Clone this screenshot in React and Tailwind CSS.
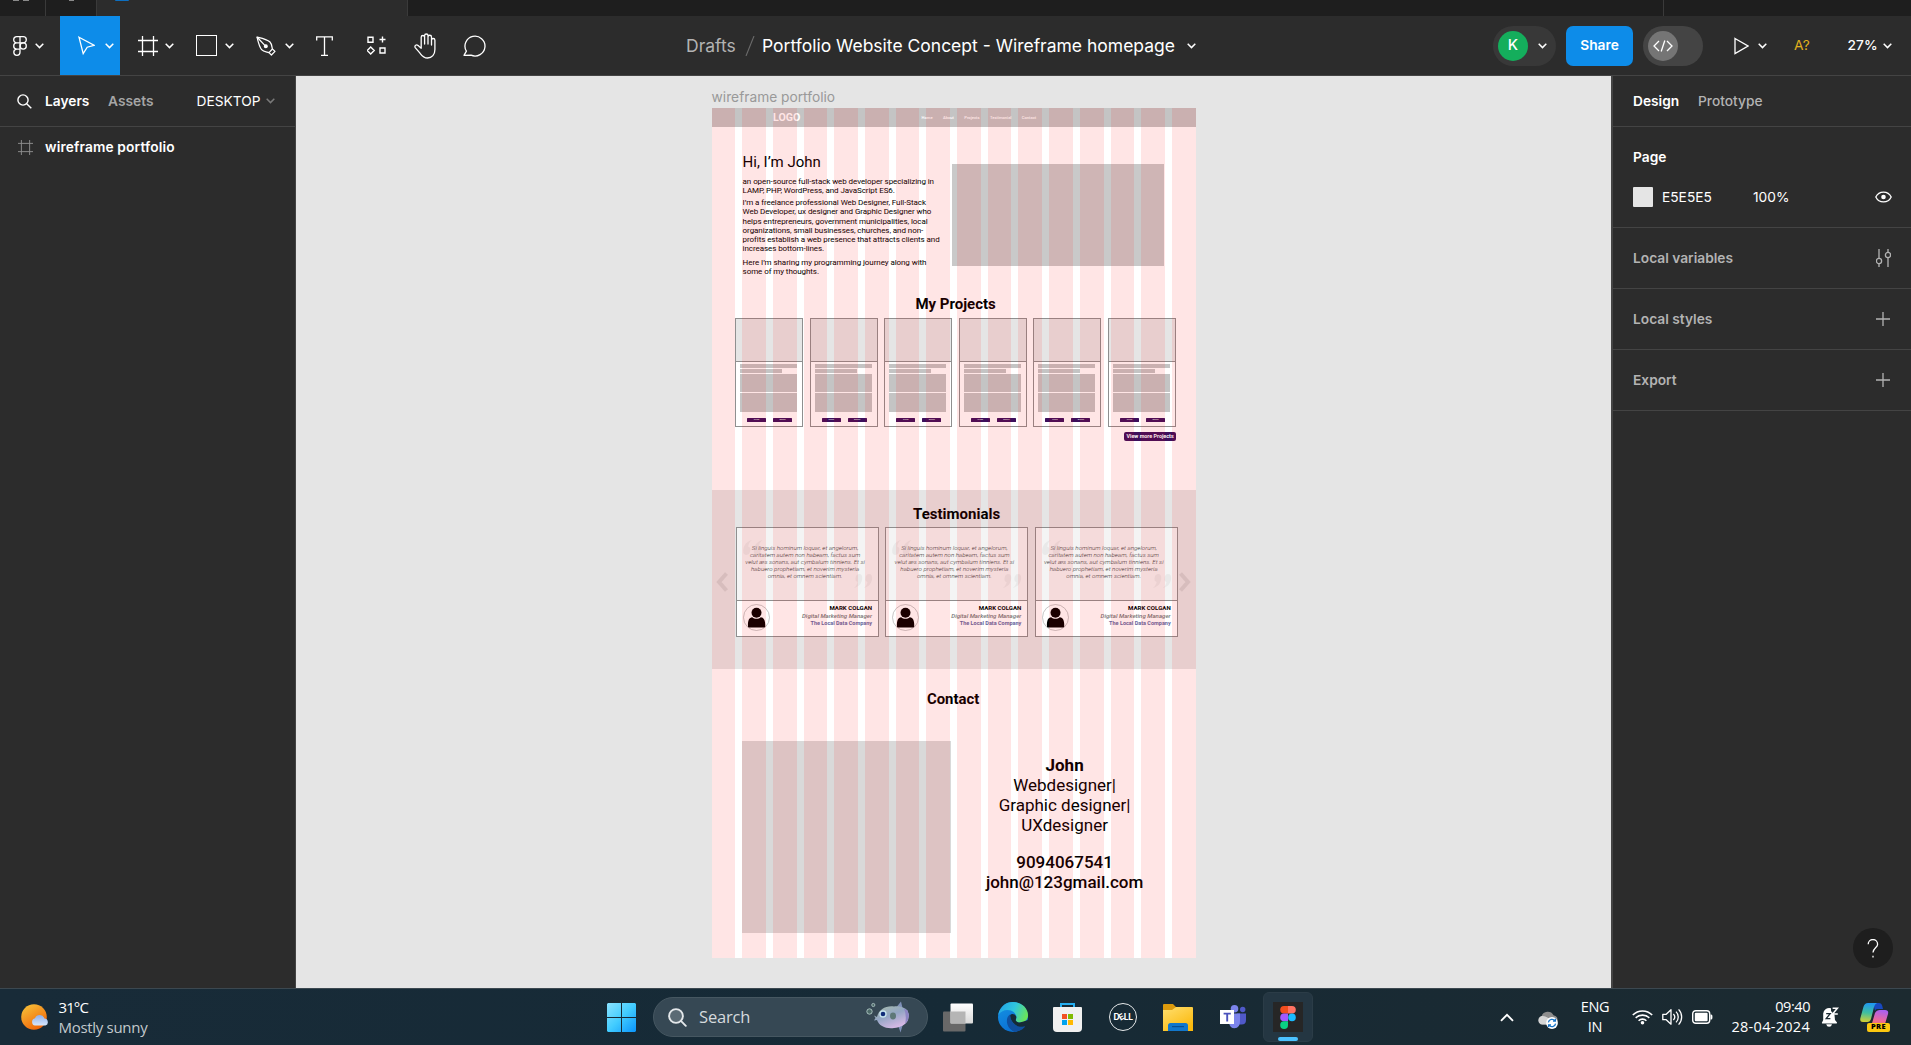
import React from "react";

const Chevron = ({ className = "text-white" }) => (
  <svg className={"h-[6px] w-[9px] shrink-0 " + className} viewBox="0 0 9 6" fill="none" stroke="currentColor" strokeWidth="1.5">
    <path d="M0.7 0.8 L4.5 4.6 L8.3 0.8" />
  </svg>
);

const FrameIcon = ({ className }) => (
  <svg className={className} viewBox="0 0 20 20" fill="none" stroke="currentColor" strokeWidth="1.3">
    <path d="M4.5 0V20M15.5 0V20M0 4.5H20M0 15.5H20" />
  </svg>
);

/* ---------- top bars ---------- */

function TabStrip() {
  return (
    <div className="flex h-4 w-full overflow-hidden bg-[#1e1e1e]">
      <div className="flex w-[46px] justify-center gap-1 border-r border-[#3a3a3a] pr-1">
        <div className="h-px w-1.5 bg-[#8a8a8a]" />
        <div className="h-px w-1.5 bg-[#8a8a8a]" />
      </div>
      <div className="flex w-[51px] justify-center border-r border-[#3a3a3a]">
        <div className="h-px w-[5px] bg-[#8a8a8a]" />
      </div>
      <div className="w-[311px] border-r border-[#3a3a3a] bg-[#2c2c2c] pl-[18px]">
        <div className="h-px w-[14px] rounded-b-sm bg-[#0d6fc0]" />
      </div>
      <div className="w-[1256px] border-r border-[#3a3a3a]" />
    </div>
  );
}

function Toolbar() {
  return (
    <div className="flex h-[60px] w-full items-center border-b border-[#444444] bg-[#2c2c2c] text-white">
      <div className="flex w-[60px] shrink-0 items-center gap-2 pl-[13px]">
        <svg className="h-5 w-[14px]" viewBox="0 0 14 20" fill="none" stroke="white" strokeWidth="1.3">
          <path d="M7 0.7H3.8a3.1 3.1 0 0 0 0 6.2H7zM7 0.7h3.2a3.1 3.1 0 0 1 0 6.2H7zM7 6.9H3.8a3.1 3.1 0 0 0 0 6.2H7zM7 13.1H3.8A3.1 3.1 0 1 0 7 16.2z" />
          <circle cx="10.2" cy="10" r="3.1" />
        </svg>
        <Chevron />
      </div>
      <div className="flex h-full w-[60px] shrink-0 items-center gap-[10px] bg-[#0d8ce9] pl-[18px]">
        <svg className="h-[19px] w-[17px]" viewBox="0 0 17 19" fill="none" stroke="white" strokeWidth="1.3">
          <path d="M1 1.2 L16 9.3 L9.2 11.2 L5.2 17.6 Z" />
        </svg>
        <Chevron />
      </div>
      <div className="flex w-[60px] shrink-0 items-center gap-[7px] pl-[18px]">
        <FrameIcon className="h-5 w-5" />
        <Chevron />
      </div>
      <div className="flex w-[60px] shrink-0 items-center gap-2 pl-4">
        <div className="h-[21px] w-[21px] border border-white" />
        <Chevron />
      </div>
      <div className="flex w-[60px] shrink-0 items-center gap-[9px] pl-4">
        <svg className="h-[20px] w-[20px]" viewBox="0 0 20 20" fill="none" stroke="white" strokeWidth="1.25" strokeLinejoin="round">
          <path d="M1 1 C6 2.2 11 3.2 13.8 5.8 C16 8 15.8 11 16.4 13 L13 16.6 C10.5 15.8 7.4 15.8 5.6 13.6 C3.2 10.8 2.2 6 1 1 Z" />
          <path d="M1 1 L8.6 9.2M16.4 13 L19 15.4 L15.4 19 L13 16.6" />
          <circle cx="9.8" cy="10.2" r="1.4" fill="white" />
        </svg>
        <Chevron />
      </div>
      <svg className="ml-4 h-5 w-[17px] shrink-0" viewBox="0 0 17 20" fill="none" stroke="white" strokeWidth="1.3">
        <path d="M0.7 4.5V0.8H16.3V4.5M8.5 0.8V19.3M5 19.3H12" />
      </svg>
      <svg className="ml-[34px] h-[19px] w-[19px] shrink-0" viewBox="0 0 19 19" fill="none" stroke="white" strokeWidth="1.4">
        <path d="M1 1.2H6V6.2H1zM13 12H18V17H13zM15.5 0.5V6.5M12.5 3.5H18.5M3.7 11L7.2 14.5L3.7 18L0.2 14.5z" />
      </svg>
      <svg className="ml-[28px] h-[26px] w-[23px] shrink-0" viewBox="0 0 23 26" fill="none" stroke="white" strokeWidth="1.3" strokeLinejoin="round" strokeLinecap="round">
        <path d="M7.2 13V4.2a1.7 1.7 0 0 1 3.4 0V11M10.6 10V2.7a1.7 1.7 0 0 1 3.4 0V10.6M14 11V4a1.7 1.7 0 0 1 3.5 0V12M17.5 12V7.2a1.7 1.7 0 0 1 3.4 0V16.5C20.9 21.5 18 25 13.5 25 9.5 25 7.7 22.5 6 20.2L1.2 14.6C0.2 12.4 2.4 11.2 4.1 12.6L7.2 15.2V12" />
      </svg>
      <svg className="ml-[26px] h-[22px] w-[24px] shrink-0" viewBox="0 0 24 22" fill="none" stroke="white" strokeWidth="1.3" strokeLinejoin="round">
        <path d="M1 20.3 L3.4 16.2 A10 9.9 0 1 1 8 20.2 Z" />
      </svg>

      <div className="ml-[199px] flex w-[600px] shrink-0 items-center font-[Inter] text-[17.5px] leading-6 whitespace-nowrap">
        <span className="w-[51px] text-[#b3b3b3]">Drafts</span>
        <svg className="ml-2 h-5 w-2.5" viewBox="0 0 10 20" stroke="#6b6b6b" strokeWidth="1.1">
          <path d="M1 20L9 0" />
        </svg>
        <span className="ml-[7px] w-[413px]">Portfolio Website Concept - Wireframe homepage</span>
        <Chevron className="ml-[12px] text-white" />
      </div>

      <div className="ml-[207px] flex h-10 w-[63px] shrink-0 items-center gap-2.5 rounded-full bg-[#383838] pl-[5px] font-[Inter]">
        <div className="flex h-[30px] w-[30px] items-center justify-center rounded-full bg-[#14ae5c] text-[15px] font-medium">K</div>
        <Chevron />
      </div>
      <div className="ml-2.5 flex h-10 w-[67px] shrink-0 items-center justify-center rounded-[7px] bg-[#0d8ce9] font-[Inter] text-[13.75px] font-semibold">Share</div>
      <div className="ml-2.5 flex h-10 w-[60px] shrink-0 items-center rounded-full bg-[#444444] pl-[5px]">
        <div className="flex h-[30px] w-[30px] items-center justify-center rounded-full bg-[#757575]">
          <svg className="h-3 w-5" viewBox="0 0 20 12" fill="none" stroke="white" strokeWidth="1.3">
            <path d="M6 1L1 6L6 11M14 1L19 6L14 11M11.8 0.5L8.2 11.5" />
          </svg>
        </div>
      </div>
      <svg className="ml-[31px] h-[18px] w-[15px] shrink-0" viewBox="0 0 15 18" fill="none" stroke="white" strokeWidth="1.3">
        <path d="M1 1.5L14 9L1 16.5z" />
      </svg>
      <Chevron className="ml-[9px] text-white" />
      <div className="ml-[27px] w-[53.5px] shrink-0 font-[Inter] text-[13.75px] text-[#e0b01c]">A?</div>
      <div className="w-[30px] shrink-0 font-[Inter] text-[13.75px] font-medium tracking-[0.01em]">27%</div>
      <Chevron className="ml-[5px] text-white" />
    </div>
  );
}

/* ---------- side panels ---------- */

function LeftPanel() {
  return (
    <div className="w-[296px] shrink-0 border-r border-[#444444] bg-[#2c2c2c] font-[Inter] text-[13.75px] text-white">
      <div className="flex h-[51px] items-center border-b border-[#444444] pl-[17px]">
        <svg className="h-[15px] w-[15px]" viewBox="0 0 15 15" fill="none" stroke="white" strokeWidth="1.4">
          <circle cx="6" cy="6" r="5.1" />
          <path d="M9.7 9.7L14.3 14.3" />
        </svg>
        <span className="ml-[13px] w-[63px] font-semibold">Layers</span>
        <span className="w-[88.5px] font-semibold text-[#a5a5a5]">Assets</span>
        <span className="w-[69.5px]">DESKTOP</span>
        <Chevron className="text-[#7a7a7a]" />
      </div>
      <div className="flex h-[41px] items-center pl-[18px]">
        <FrameIcon className="h-[15px] w-[15px] text-[#8c8c8c]" />
        <span className="ml-3 font-semibold tracking-[0.01em]">wireframe portfolio</span>
      </div>
    </div>
  );
}

const Plus = () => (
  <svg className="mr-[21px] h-[14px] w-[14px]" viewBox="0 0 14 14" stroke="#b3b3b3" strokeWidth="1.3">
    <path d="M7 0V14M0 7H14" />
  </svg>
);

const PanelRow = ({ label, children }) => (
  <div className="flex h-[61px] items-center justify-between border-b border-[#444444] pl-5 font-semibold text-[#b3b3b3]">
    <span>{label}</span>
    {children}
  </div>
);

function RightPanel() {
  return (
    <div className="relative w-[300px] shrink-0 border-l-2 border-[#444444] bg-[#2c2c2c] font-[Inter] text-[13.75px] text-white">
      <div className="flex h-[51px] items-center border-b border-[#444444] pl-5">
        <span className="w-[65px] font-semibold">Design</span>
        <span className="font-medium text-[#b3b3b3]">Prototype</span>
      </div>
      <div className="h-[101px] border-b border-[#444444] pt-5 pl-5">
        <div className="leading-[21px] font-semibold">Page</div>
        <div className="mt-[19px] flex h-5 items-center">
          <div className="h-5 w-5 rounded-[1px] bg-[#e5e5e5]" />
          <span className="ml-[9px] w-[91px]">E5E5E5</span>
          <span className="w-[121.5px]">100%</span>
          <svg className="h-[12px] w-[17px]" viewBox="0 0 17 12" fill="none" stroke="white" strokeWidth="1.3">
            <path d="M0.8 6C4 -0.6 13 -0.6 16.2 6C13 12.6 4 12.6 0.8 6z" />
            <circle cx="8.5" cy="6" r="2.3" fill="white" stroke="none" />
          </svg>
        </div>
      </div>
      <PanelRow label="Local variables">
        <svg className="mr-5 h-[18px] w-[15px]" viewBox="0 0 15 18" fill="none" stroke="#b3b3b3" strokeWidth="1.3">
          <path d="M3 0V9M3 15V18M12 0V3M12 9V18" />
          <circle cx="3" cy="12" r="2.6" />
          <circle cx="12" cy="6" r="2.6" />
        </svg>
      </PanelRow>
      <PanelRow label="Local styles"><Plus /></PanelRow>
      <PanelRow label="Export"><Plus /></PanelRow>
      <div className="absolute right-[18px] bottom-5 flex h-10 w-10 items-center justify-center rounded-full bg-[#1e1e1e]">
        <svg className="h-[19px] w-[12px]" viewBox="0 0 12 19" fill="none" stroke="white" strokeWidth="1.3">
          <path d="M1.2 5.2A4.6 4.6 0 0 1 10.6 5.2C10.6 8.6 6 9 6 13.6M6 16.8V18.4" />
        </svg>
      </div>
    </div>
  );
}

/* ---------- wireframe ---------- */

function ProjectCard() {
  return (
    <div className="h-[109px] w-[68px] border border-[#8f8f8f] bg-white">
      <div className="h-[43px] border-b border-[#8f8f8f] bg-[#e5e5e5]" />
      <div className="flex flex-col pt-[2px] pl-[4px]">
        <div className="h-[4px] w-[57px] bg-[#c4c4c4]" />
        <div className="mt-[1px] h-[4px] w-[42px] bg-[#c4c4c4]" />
        <div className="mt-[1px] h-[18px] w-[57px] bg-[#c4c4c4]" />
        <div className="mt-[1px] h-[19px] w-[57px] bg-[#c4c4c4]" />
      </div>
      <div className="mt-[6px] flex gap-[7px] pl-[11px] text-center text-[2.4px] leading-[4px] text-white">
        <div className="h-[4px] w-[19px] rounded-[0.5px] bg-[#3d0f5c]">Code</div>
        <div className="h-[4px] w-[19px] rounded-[0.5px] bg-[#3d0f5c]">Demo</div>
      </div>
    </div>
  );
}

const QUOTE = [
  "Si linguis hominum loquar, et angelorum,",
  "caritatem autem non habeam, factus sum",
  "velut æs sonans, aut cymbalum tinniens. Et si",
  "habuero prophetiam, et noverim mysteria",
  "omnia, et omnem scientiam.",
];

const QuoteMark = ({ className }) => (
  <svg className={className} viewBox="0 0 20 15" fill="#e9e9e9">
    <path d="M9.2 0C6.8 1.6 5.6 3.8 5.2 6.4C7 6.8 7.8 8.2 7.4 10.6C7 13.4 5.6 15 3.4 15C0.8 15 -0.2 12.8 0.3 9.4C1 4.6 4 1.2 9.2 0zM19.8 0C17.4 1.6 16.2 3.8 15.8 6.4C17.6 6.8 18.4 8.2 18 10.6C17.6 13.4 16.2 15 14 15C11.4 15 10.4 12.8 10.9 9.4C11.6 4.6 14.6 1.2 19.8 0z" />
  </svg>
);

function TestimonialCard() {
  return (
    <div className="h-[110px] w-[143px] border border-[#8f8f8f] bg-white">
      <div className="relative h-[73px] border-b border-[#8f8f8f] bg-[#f4f4f4] pt-[17px]">
        <QuoteMark className="absolute top-[12px] left-[6px] h-[15px] w-[20px]" />
        <QuoteMark className="absolute top-[46px] left-[116px] h-[14px] w-[20px] rotate-180" />
        <div className="relative pr-[5px] text-center text-[6.2px] leading-[7.1px] font-light whitespace-nowrap text-[#3a3a3a] italic">
          {QUOTE.map((line) => <div key={line}>{line}</div>)}
        </div>
      </div>
      <div className="flex justify-between pt-[3px] pr-[6px] pl-[6px]">
        <svg className="h-[27px] w-[27px]" viewBox="0 0 27 27">
          <circle cx="13.5" cy="13.5" r="13" fill="none" stroke="#a0a0a0" strokeWidth="0.6" />
          <circle cx="13.5" cy="8.8" r="5" />
          <path d="M5 22.8C4.6 16.5 6 13.6 9.2 13.2C11.6 15.4 15.4 15.4 17.8 13.2C21 13.6 22.6 16.5 22.2 22.8C22 23.3 21.6 23.5 21 23.5H6.2C5.6 23.5 5.2 23.3 5 22.8z" />
        </svg>
        <div className="text-right whitespace-nowrap">
          <div className="text-[6.1px] leading-[8px] font-bold">MARK COLGAN</div>
          <div className="text-[6.1px] leading-[8px] font-medium text-[#777777] italic">Digital Marketing Manager</div>
          <div className="text-[5.5px] leading-[7px] font-bold text-[#6666a0]">The Local Data Company</div>
        </div>
      </div>
    </div>
  );
}

const Arrow = ({ className }) => (
  <svg className={className} viewBox="0 0 12 20" fill="none" stroke="#d3d3d3" strokeWidth="4">
    <path d="M10.5 1.5L3 10L10.5 18.5" />
  </svg>
);

function Wireframe() {
  return (
    <div className="relative h-[850px] w-[484px] bg-white font-[Roboto] text-black">
      <div className="flex h-[19px] items-center bg-[#c4c4c4] pl-[61.5px] font-medium text-white">
        <span className="w-[148.5px] text-[10.6px] leading-[18px] font-bold">LOGO</span>
        <div className="flex gap-[10.4px] text-[4.1px] leading-[18px]">
          <span>Home</span>
          <span>About</span>
          <span>Projects</span>
          <span>Testimonial</span>
          <span>Contact</span>
        </div>
      </div>

      <div className="flex h-[164px] pl-[31px]">
        <div className="w-[209.5px] pt-[25px] text-[8px] leading-[9.15px] tracking-[-0.009em] whitespace-nowrap">
          <div className="text-[15px] leading-[20px] tracking-normal">Hi, I’m John</div>
          <div className="mt-[4.5px]">
            an open-source full-stack web developer specializing in<br />
            LAMP, PHP, WordPress, and JavaScript ES6.
          </div>
          <div className="mt-[3.5px]">
            I’m a freelance professional Web Designer, Full-Stack<br />
            Web Developer, ux designer and Graphic Designer who<br />
            helps entrepreneurs, government municipalities, local<br />
            organizations, small businesses, churches, and non-<br />
            profits establish a web presence that attracts clients and<br />
            increases bottom-lines.
          </div>
          <div className="mt-[5px]">
            Here I’m sharing my programming journey along with<br />
            some of my thoughts.
          </div>
        </div>
        <div className="mt-[37px] h-[102px] w-[212px] bg-[#c9c9c9]" />
      </div>

      <div className="h-[199px] pt-[3px]">
        <div className="pl-[4px] text-center text-[15px] leading-[20px] font-bold">My Projects</div>
        <div className="mt-1 flex gap-[6.6px] pl-[23.5px]">
          {[0, 1, 2, 3, 4, 5].map((n) => <ProjectCard key={n} />)}
        </div>
        <div className="mt-[5px] ml-[412.5px] h-[9px] w-[52px] rounded-[2px] bg-[#3d0f5c] text-center text-[5.4px] leading-[8.5px] font-bold whitespace-nowrap text-white">
          View more Projects
        </div>
      </div>

      <div className="h-[179px] bg-[#e5e5e5] pt-[14px]">
        <div className="pl-[6px] text-center text-[15px] leading-[20px] font-bold">Testimonials</div>
        <div className="mt-[3px] flex items-center">
          <Arrow className="ml-[4.5px] h-[20px] w-[12px]" />
          <div className="ml-[8px] flex gap-[6.3px]">
            <TestimonialCard />
            <TestimonialCard />
            <TestimonialCard />
          </div>
          <Arrow className="ml-[1px] h-[20px] w-[12px] rotate-180" />
        </div>
      </div>

      <div className="pt-[19.5px]">
        <div className="pr-px text-center text-[14.9px] leading-[20px] font-bold">Contact</div>
        <div className="mt-[32px] flex">
          <div className="ml-[30.5px] h-[192px] w-[209px] bg-[#d9d9d9]" />
          <div className="ml-[28.5px] w-[170px] pt-[14.5px] text-center text-[17px] leading-[20px] whitespace-nowrap">
            <div className="font-bold">John</div>
            <div>Webdesigner|</div>
            <div>Graphic designer|</div>
            <div>UXdesigner</div>
            <div className="mt-[16.5px] font-medium">9094067541</div>
            <div className="font-medium">john@123gmail.com</div>
          </div>
        </div>
      </div>

      <div className="absolute inset-0 flex gap-[7px]">
        {Array.from({ length: 16 }, (_, n) => <div key={n} className="h-full flex-1 bg-[#ff0000]/10" />)}
      </div>
    </div>
  );
}

/* ---------- taskbar ---------- */

function Taskbar() {
  return (
    <div className="flex h-[57px] w-full items-center border-t border-[#3c4850] bg-linear-to-r from-[#182b38] via-[#162a36] to-[#1c2a30] font-[Open_Sans] text-white">
      <svg className="ml-[21px] h-[27px] w-[29px] shrink-0" viewBox="0 0 29 27">
        <defs>
          <linearGradient id="sun" x1="0" y1="0" x2="0.6" y2="1">
            <stop offset="0" stopColor="#f8c83c" />
            <stop offset="1" stopColor="#f0660a" />
          </linearGradient>
          <linearGradient id="cloud" x1="0" y1="0" x2="0" y2="1">
            <stop offset="0" stopColor="#8fb0ec" />
            <stop offset="1" stopColor="#d8e6fb" />
          </linearGradient>
        </defs>
        <circle cx="13" cy="13" r="12.8" fill="url(#sun)" />
        <path d="M14 21.6a3.8 3.8 0 0 1 0-7.4 5 5 0 0 1 9.4 0.4 3.6 3.6 0 0 1 1 7z" fill="url(#cloud)" />
      </svg>
      <div className="ml-[8.5px] w-[548.5px] shrink-0 text-[15px] leading-5">
        <div className="-mt-px tracking-[-0.06em]">31°C</div>
        <div className="tracking-[-0.02em] text-[#c3c9cd]">Mostly sunny</div>
      </div>
      <svg className="h-[29px] w-[29px] shrink-0" viewBox="0 0 29 29">
        <defs>
          <linearGradient id="win" x1="0" y1="0" x2="1" y2="1" gradientUnits="objectBoundingBox">
            <stop offset="0" stopColor="#8be3ff" />
            <stop offset="0.5" stopColor="#42ccff" />
            <stop offset="1" stopColor="#0a94fb" />
          </linearGradient>
        </defs>
        <path d="M1 0H14V14H0V1zM15 0H28L29 1V14H15zM0 15H14V29H1L0 28zM15 15H29V28L28 29H15z" fill="url(#win)" />
      </svg>
      <div className="ml-[17px] flex h-10 w-[275px] shrink-0 items-center rounded-full border border-[#465761] bg-[#364854] pl-[14px]">
        <svg className="h-[19px] w-[19px]" viewBox="0 0 19 19" fill="none" stroke="#e3e7ea" strokeWidth="1.9">
          <circle cx="8" cy="8" r="6.9" fill="#5a6a74" />
          <path d="M12.9 12.9L17.8 17.8" strokeLinecap="round" />
        </svg>
        <span className="ml-[12px] w-[167px] text-[16.5px] tracking-[-0.01em] text-[#d5dadd]">Search</span>
        <svg className="h-[32px] w-[44px]" viewBox="0 0 44 32">
          <defs>
            <linearGradient id="fish" x1="0" y1="0" x2="0.6" y2="1">
              <stop offset="0" stopColor="#a9bda8" />
              <stop offset="0.5" stopColor="#93a6c4" />
              <stop offset="1" stopColor="#d8b9e6" />
            </linearGradient>
          </defs>
          <path d="M29 8L35 0.5L37 9zM32 24L34.5 31.5L37 23z" fill="#7f90b8" />
          <path d="M8 14.5L11 16C13 8 20 4.5 28 5.5C34 4.8 39 7 41.5 9.5L43 14L42 19C40 24 34 26.5 28 27C20 28 13 25 11 19L8 19.5L9.5 17z" fill="url(#fish)" />
          <path d="M38 7.5L41.5 9.5L43 14L42 19L39 23Q41 15 38 7.5z" fill="#8d86c4" />
          <ellipse cx="27" cy="15" rx="3" ry="3.4" fill="#5e7878" />
          <circle cx="17" cy="13" r="3.7" fill="#c7e4ee" />
          <circle cx="17" cy="13" r="2.3" fill="#102c78" />
          <circle cx="3.5" cy="10.5" r="2.7" fill="#4d6a68" stroke="#bed6d2" strokeWidth="0.8" />
          <circle cx="7.3" cy="4" r="1.6" fill="#4d6a68" stroke="#bed6d2" strokeWidth="0.7" />
        </svg>
      </div>
      <svg className="ml-[15px] h-[29px] w-[30px] shrink-0" viewBox="0 0 30 29">
        <defs>
          <linearGradient id="tv" x1="0" y1="0" x2="0" y2="1"><stop offset="0" stopColor="#ffffff" /><stop offset="1" stopColor="#d8d8d8" /></linearGradient>
        </defs>
        <rect x="0" y="8.5" width="22.5" height="20" rx="1" fill="#686868" />
        <rect x="7.5" y="0.5" width="22.5" height="20" rx="1" fill="url(#tv)" />
        <rect x="7.5" y="8.5" width="15" height="12" fill="#b5b5b5" />
      </svg>
      <svg className="ml-[25px] h-[30px] w-[30px] shrink-0" viewBox="0 0 30 30">
        <defs>
          <linearGradient id="edgeTop" x1="0" y1="0.3" x2="1" y2="0.6"><stop offset="0" stopColor="#22a5e6" /><stop offset="0.5" stopColor="#30c6dd" /><stop offset="1" stopColor="#6ce554" /></linearGradient>
          <linearGradient id="edgeLeft" x1="0" y1="0" x2="0.5" y2="1"><stop offset="0" stopColor="#1594e4" /><stop offset="1" stopColor="#0a6fd2" /></linearGradient>
        </defs>
        <circle cx="15" cy="15" r="15" fill="url(#edgeLeft)" />
        <path d="M0.2 13C2 4.5 8 0 15 0C23.5 0 30 6 30 13.2C30 18 26.5 20.5 22.5 20.5C19 20.5 17 19.4 18 17.5C20 12.5 15 8 9.5 8C5.5 8 2 10 0.2 13z" fill="url(#edgeTop)" />
        <path d="M12 12.4C6.8 16 8 26 16.5 29.9C22 29.6 26 26.8 28 23.3C24.5 25.2 20 25 17 22.5C13.5 19.8 12 16.5 12 12.4z" fill="#104f9e" />
        <path d="M12.2 13C13.5 11.4 17 11.6 18.2 14.6C18.6 16 17.6 17.4 17.8 18.6C18.8 20.6 22.5 21 25.5 19.6L30 18L30 26L26.5 24.2C23.4 25.4 19.6 24.6 17 22.5C14 20.2 12 16.5 12.2 13z" fill="#162a36" />
      </svg>
      <svg className="ml-[25px] h-[29px] w-[29px] shrink-0" viewBox="0 0 29 29">
        <path d="M8 5V1H21V5" fill="none" stroke="#25aef0" strokeWidth="2" />
        <path d="M1 4H28Q29 4 29 5V25Q29 29 25 29H4Q0 29 0 25V5Q0 4 1 4z" fill="#f0f0f0" />
        <path d="M9 11H14V16H9z" fill="#f25022" /><path d="M15 11H20V16H15z" fill="#7fba00" />
        <path d="M9 17H14V22H9z" fill="#00a4ef" /><path d="M15 17H20V22H15z" fill="#ffb900" />
      </svg>
      <div className="ml-[27px] flex h-[28px] w-[28px] shrink-0 items-center justify-center rounded-full border-[1.5px] border-[#e6e9ea] font-[Inter] text-[8.5px] leading-none font-bold tracking-[-0.06em]">
        D<span className="-rotate-[28deg]">E</span>LL
      </div>
      <svg className="ml-[26px] h-[27px] w-[30px] shrink-0" viewBox="0 0 30 27">
        <defs>
          <linearGradient id="folder" x1="0" y1="0" x2="0.7" y2="1"><stop offset="0" stopColor="#ffdf70" /><stop offset="1" stopColor="#fbb90c" /></linearGradient>
        </defs>
        <path d="M0 1Q0 0 1 0H10L13 3H18V8H0z" fill="#dc9a0c" />
        <path d="M0 6H9L13 3H29Q30 3 30 4V27H0z" fill="url(#folder)" />
        <path d="M5 27V21.5Q5 19 7.5 19H22.5Q25 19 25 21.5V27z" fill="#1277cc" />
        <path d="M9 22.6H21" stroke="#0a4f92" strokeWidth="1.2" />
      </svg>
      <svg className="ml-[27px] h-[24px] w-[27px] shrink-0" viewBox="0 0 27 24">
        <circle cx="14.5" cy="3.8" r="3.8" fill="#7b83eb" /><circle cx="22.7" cy="4.5" r="2.7" fill="#5059c9" />
        <path d="M17 8.5H26V15Q26 19.5 21.5 19.5H17z" fill="#5059c9" />
        <path d="M9 8.5H20V16Q20 23.3 14.5 23.3Q10 23.3 9 18z" fill="#7b83eb" />
        <path d="M0 5H14V19H0z" fill="#ffffff" />
        <path d="M3.6 8.6H10.8M7.2 8.6V16.4" stroke="#4b53bc" strokeWidth="1.9" />
      </svg>
      <div className="relative ml-[16px] flex h-[50px] w-[50px] shrink-0 items-center justify-center rounded-md border border-[#2b3c47] bg-[#243642]">
        <div className="flex h-[30px] w-[30px] items-center justify-center bg-[#262626]">
          <svg className="h-[23px] w-[16px]" viewBox="0 0 16 23">
            <path d="M8 0H4a3.8 3.8 0 0 0 0 7.6H8z" fill="#f24e1e" /><path d="M8 0h4a3.8 3.8 0 0 1 0 7.6H8z" fill="#ff7262" />
            <path d="M8 7.6H4a3.8 3.8 0 0 0 0 7.6H8z" fill="#a259ff" /><circle cx="12" cy="11.4" r="3.8" fill="#1abcfe" />
            <path d="M8 15.2H4A3.9 3.9 0 1 0 8 19z" fill="#0acf83" />
          </svg>
        </div>
        <div className="absolute bottom-0 left-[14px] h-1 w-5 rounded-full bg-[#4cc2ff]" />
      </div>

      <svg className="ml-[187px] h-[9px] w-[14px] shrink-0" viewBox="0 0 14 9" fill="none" stroke="white" strokeWidth="1.9">
        <path d="M1 7.8L7 1.8L13 7.8" />
      </svg>
      <svg className="ml-[23px] h-[18px] w-[21px] shrink-0 translate-y-[3px]" viewBox="0 0 21 18">
        <path d="M5 13.6A4.6 4.6 0 0 1 4.6 5.2 6.5 6.5 0 0 1 16.5 4.2 4.8 4.8 0 0 1 17 13.6z" fill="#8d8d8d" />
        <path d="M5 13.6A4.4 4.4 0 0 1 4 5.2C8 4 10 7 15 9L10 13.6z" fill="#d5d5d5" />
        <circle cx="15" cy="12" r="5.9" fill="#ffffff" />
        <path d="M11.4 11.4A3.7 3.7 0 0 1 18 9.8M18.6 12.6A3.7 3.7 0 0 1 12 14.2M18.4 7.8V10.2H16M11.6 16.2V13.8H14" fill="none" stroke="#1976c8" strokeWidth="1.3" />
      </svg>
      <div className="ml-[20px] w-[34px] shrink-0 text-center text-[14.5px] leading-5 tracking-[-0.02em]">ENG<br />IN</div>
      <svg className="ml-[20px] h-[16px] w-[21px] shrink-0" viewBox="0 0 21 16" fill="none" stroke="white" strokeWidth="1.6">
        <path d="M0.8 6A13.6 13.6 0 0 1 20.2 6M3.7 8.9A9.6 9.6 0 0 1 17.3 8.9M6.6 11.7A5.5 5.5 0 0 1 14.4 11.7" />
        <circle cx="10.5" cy="13.8" r="1.8" fill="white" stroke="none" />
      </svg>
      <svg className="ml-[9px] h-[18px] w-[21px] shrink-0" viewBox="0 0 21 18" fill="none" stroke="white" strokeWidth="1.3" strokeLinejoin="round">
        <path d="M0.8 6.3H4.2L9 1.8V16.2L4.2 11.7H0.8zM11.4 6A4.4 4.4 0 0 1 11.4 12M14 3.6A7.6 7.6 0 0 1 14 14.4M16.6 1.4A11 11 0 0 1 16.6 16.6" />
      </svg>
      <svg className="ml-[9px] h-[14px] w-[21px] shrink-0" viewBox="0 0 21 14">
        <rect x="0.7" y="0.7" width="17" height="12.6" rx="3" fill="none" stroke="white" strokeWidth="1.4" />
        <rect x="2.8" y="2.8" width="12.8" height="8.4" rx="1" fill="white" /><path d="M18.5 4.5H19.2Q20.4 4.5 20.4 6V8Q20.4 9.5 19.2 9.5H18.5z" fill="white" />
      </svg>
      <div className="ml-[10px] w-[87px] shrink-0 text-right text-[14.5px] leading-5 whitespace-nowrap">
        <div className="-mt-px tracking-[-0.03em]">09:40</div>
        <div className="tracking-[0.02em]">28-04-2024</div>
      </div>
      <svg className="ml-[11px] h-[20px] w-[18px] shrink-0" viewBox="0 0 18 20">
        <path d="M1 15.5L2.2 13V6.5A6 6 0 0 1 10 1.2V4L13.5 8L14 13L16 15.5Q16.2 16.4 15.4 16.4H1.4Q0.6 16.4 1 15.5zM5.2 17.2H11Q10.5 19.8 8.1 19.8Q5.8 19.8 5.2 17.2z" fill="white" />
        <path d="M5.2 6.6H9.2L5.2 11.6H9.4" fill="none" stroke="#1b2a33" strokeWidth="1.3" />
        <path d="M11.6 1.2H16.4L11.6 7H16.8" fill="none" stroke="white" strokeWidth="1.5" />
      </svg>
      <div className="relative ml-[21px] h-[29px] w-[30px] shrink-0">
        <svg className="h-[27px] w-[29px]" viewBox="0 0 29 27">
          <defs>
            <linearGradient id="cpA" x1="0.3" y1="0" x2="0.2" y2="1"><stop offset="0" stopColor="#2098f0" /><stop offset="0.5" stopColor="#3fbfa0" /><stop offset="1" stopColor="#d8d030" /></linearGradient>
            <linearGradient id="cpB" x1="0.6" y1="0" x2="0.4" y2="1"><stop offset="0" stopColor="#a860f0" /><stop offset="0.5" stopColor="#e868a0" /><stop offset="1" stopColor="#f88048" /></linearGradient>
          </defs>
          <path d="M13 0H19Q21.5 0 22.3 3L23 6H17Q15.5 6 15 8Z" fill="#1848c0" />
          <path d="M8 0H17Q14.8 1 14 4L11 16Q10 19 7.5 19H3Q-0.5 19 0.4 15L3.4 4Q4.6 0 8 0z" fill="url(#cpA)" />
          <path d="M20 7H25Q29 7 28 11L25 21Q24 26 20 26H7Q10 26 11.5 22L15 10Q16.5 7 20 7z" fill="url(#cpB)" />
        </svg>
        <div className="absolute right-0 bottom-0 flex h-[9px] w-[23px] items-center justify-center rounded-[2px] bg-[#fcc810] text-[7.5px] leading-none font-extrabold tracking-[0.04em] text-black">PRE</div>
      </div>
    </div>
  );
}

export default function App() {
  return (
    <div className="flex h-[1045px] w-[1911px] flex-col overflow-hidden">
      <TabStrip />
      <Toolbar />
      <div className="flex h-[912px] w-full">
        <LeftPanel />
        <div className="min-w-0 flex-1 bg-[#e5e5e5] pl-[415.6px]">
          <div className="h-8 pt-[9px] font-[Inter] text-[13.75px] leading-6 text-[#999999]">wireframe portfolio</div>
          <Wireframe />
        </div>
        <RightPanel />
      </div>
      <Taskbar />
    </div>
  );
}
